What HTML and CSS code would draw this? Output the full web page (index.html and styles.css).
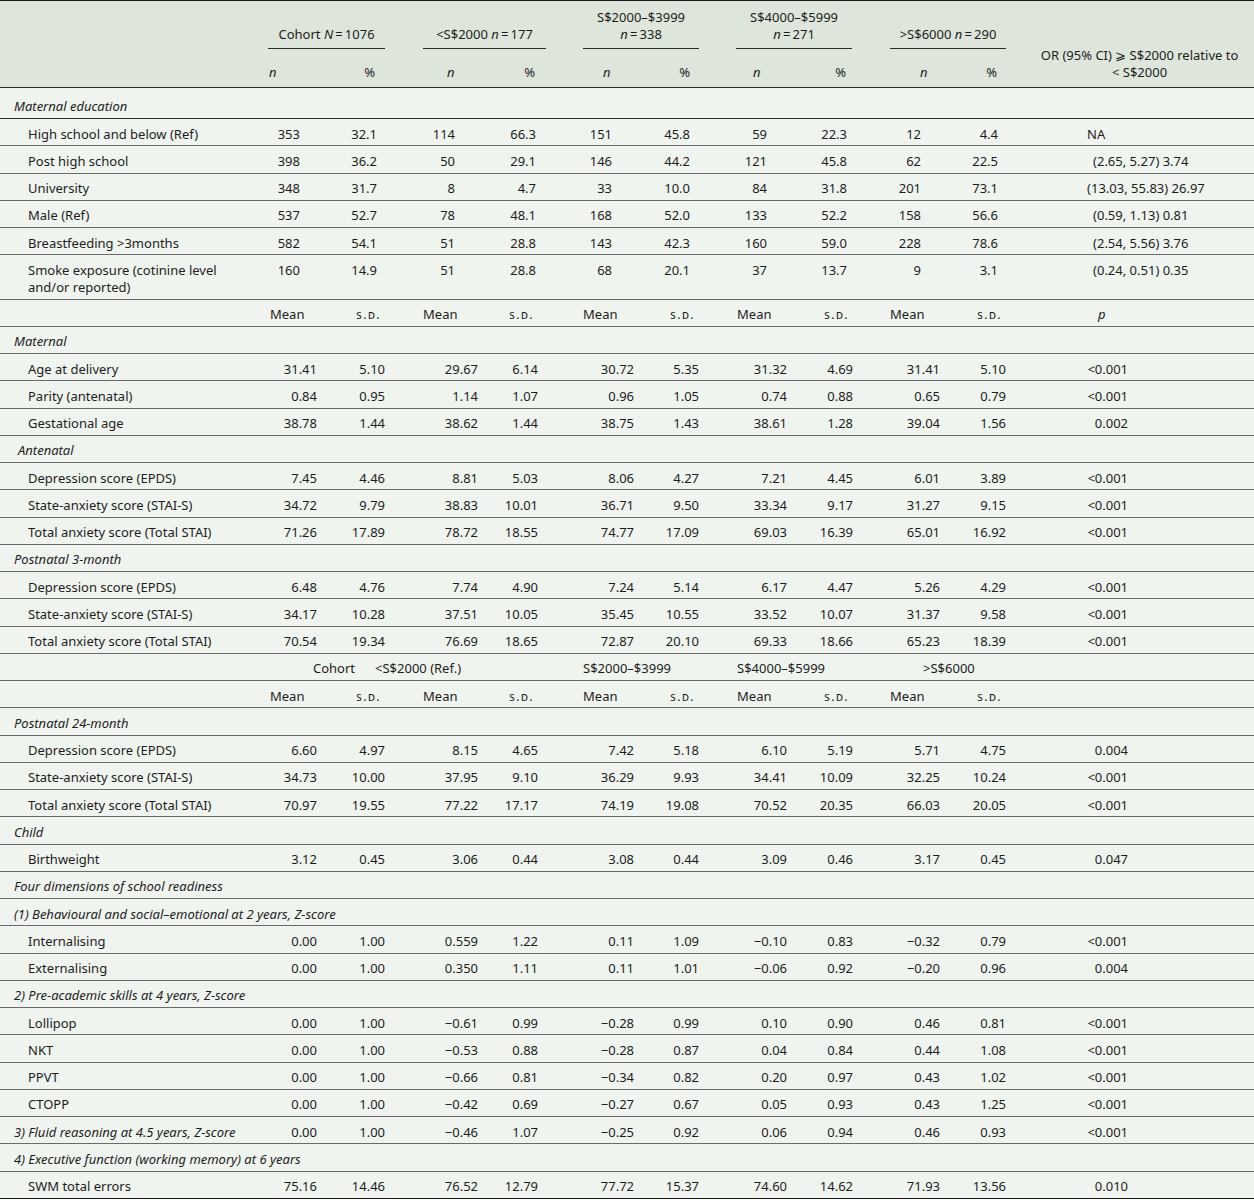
FILE: index.html
```html
<!DOCTYPE html>
<html lang="en">
<head>
<meta charset="utf-8">
<title>Table</title>
<link rel="stylesheet" href="styles.css">
</head>
<body>
<table class="tbl">
<colgroup>
<col class="w0"><col class="wa1"><col class="wb1"><col class="wa2"><col class="wb2"><col class="wa3"><col class="wb3"><col class="wa4"><col class="wb4"><col class="wa5"><col class="wb5"><col class="wor">
</colgroup>
<thead>
<tr class="h1">
<th rowspan="2" class="lh"></th>
<th colspan="2" class="grp g1"><div class="gl">Cohort <i>N</i>&#8201;=&#8201;1076</div></th>
<th colspan="2" class="grp g2"><div class="gl">&lt;S$2000 <i>n</i>&#8201;=&#8201;177</div></th>
<th colspan="2" class="grp g3"><div class="gl">S$2000–$3999<br><i>n</i>&#8201;=&#8201;338</div></th>
<th colspan="2" class="grp g4"><div class="gl">S$4000–$5999<br><i>n</i>&#8201;=&#8201;271</div></th>
<th colspan="2" class="grp g5"><div class="gl">&gt;S$6000 <i>n</i>&#8201;=&#8201;290</div></th>
<th rowspan="2" class="orh">OR (95% CI) ⩾ S$2000 relative to<br>&lt; S$2000</th>
</tr>
<tr class="h2">
<th><i>n</i></th><th>%</th>
<th><i>n</i></th><th>%</th>
<th><i>n</i></th><th>%</th>
<th><i>n</i></th><th>%</th>
<th><i>n</i></th><th>%</th>
</tr>
</thead>
<tbody>
<tr class="sec first"><td colspan="12">Maternal education</td></tr>
<tr class="c"><td>High school and below (Ref)</td><td>353</td><td>32.1</td><td>114</td><td>66.3</td><td>151</td><td>45.8</td><td>59</td><td>22.3</td><td>12</td><td>4.4</td><td class="or">NA</td></tr>
<tr class="c"><td>Post high school</td><td>398</td><td>36.2</td><td>50</td><td>29.1</td><td>146</td><td>44.2</td><td>121</td><td>45.8</td><td>62</td><td>22.5</td><td class="or in">(2.65, 5.27) 3.74</td></tr>
<tr class="c"><td>University</td><td>348</td><td>31.7</td><td>8</td><td>4.7</td><td>33</td><td>10.0</td><td>84</td><td>31.8</td><td>201</td><td>73.1</td><td class="or">(13.03, 55.83) 26.97</td></tr>
<tr class="c"><td>Male (Ref)</td><td>537</td><td>52.7</td><td>78</td><td>48.1</td><td>168</td><td>52.0</td><td>133</td><td>52.2</td><td>158</td><td>56.6</td><td class="or in">(0.59, 1.13) 0.81</td></tr>
<tr class="c"><td>Breastfeeding &gt;3months</td><td>582</td><td>54.1</td><td>51</td><td>28.8</td><td>143</td><td>42.3</td><td>160</td><td>59.0</td><td>228</td><td>78.6</td><td class="or in">(2.54, 5.56) 3.76</td></tr>
<tr class="c"><td>Smoke exposure (cotinine level<br>and/or reported)</td><td>160</td><td>14.9</td><td>51</td><td>28.8</td><td>68</td><td>20.1</td><td>37</td><td>13.7</td><td>9</td><td>3.1</td><td class="or in">(0.24, 0.51) 0.35</td></tr>
<tr class="mh"><td></td><td>Mean</td><td class="sd">s.d.</td><td>Mean</td><td class="sd">s.d.</td><td>Mean</td><td class="sd">s.d.</td><td>Mean</td><td class="sd">s.d.</td><td>Mean</td><td class="sd">s.d.</td><td class="p"><i>p</i></td></tr>
<tr class="sec"><td colspan="12">Maternal</td></tr>
<tr class="d"><td>Age at delivery</td><td>31.41</td><td>5.10</td><td>29.67</td><td>6.14</td><td>30.72</td><td>5.35</td><td>31.32</td><td>4.69</td><td>31.41</td><td>5.10</td><td>&lt;0.001</td></tr>
<tr class="d"><td>Parity (antenatal)</td><td>0.84</td><td>0.95</td><td>1.14</td><td>1.07</td><td>0.96</td><td>1.05</td><td>0.74</td><td>0.88</td><td>0.65</td><td>0.79</td><td>&lt;0.001</td></tr>
<tr class="d"><td>Gestational age</td><td>38.78</td><td>1.44</td><td>38.62</td><td>1.44</td><td>38.75</td><td>1.43</td><td>38.61</td><td>1.28</td><td>39.04</td><td>1.56</td><td>0.002</td></tr>
<tr class="sec sec2"><td colspan="12">Antenatal</td></tr>
<tr class="d"><td>Depression score (EPDS)</td><td>7.45</td><td>4.46</td><td>8.81</td><td>5.03</td><td>8.06</td><td>4.27</td><td>7.21</td><td>4.45</td><td>6.01</td><td>3.89</td><td>&lt;0.001</td></tr>
<tr class="d"><td>State-anxiety score (STAI-S)</td><td>34.72</td><td>9.79</td><td>38.83</td><td>10.01</td><td>36.71</td><td>9.50</td><td>33.34</td><td>9.17</td><td>31.27</td><td>9.15</td><td>&lt;0.001</td></tr>
<tr class="d"><td>Total anxiety score (Total STAI)</td><td>71.26</td><td>17.89</td><td>78.72</td><td>18.55</td><td>74.77</td><td>17.09</td><td>69.03</td><td>16.39</td><td>65.01</td><td>16.92</td><td>&lt;0.001</td></tr>
<tr class="sec"><td colspan="12">Postnatal 3-month</td></tr>
<tr class="d"><td>Depression score (EPDS)</td><td>6.48</td><td>4.76</td><td>7.74</td><td>4.90</td><td>7.24</td><td>5.14</td><td>6.17</td><td>4.47</td><td>5.26</td><td>4.29</td><td>&lt;0.001</td></tr>
<tr class="d"><td>State-anxiety score (STAI-S)</td><td>34.17</td><td>10.28</td><td>37.51</td><td>10.05</td><td>35.45</td><td>10.55</td><td>33.52</td><td>10.07</td><td>31.37</td><td>9.58</td><td>&lt;0.001</td></tr>
<tr class="d"><td>Total anxiety score (Total STAI)</td><td>70.54</td><td>19.34</td><td>76.69</td><td>18.65</td><td>72.87</td><td>20.10</td><td>69.33</td><td>18.66</td><td>65.23</td><td>18.39</td><td>&lt;0.001</td></tr>
<tr class="gr"><td></td><td colspan="10"><div class="grl"><span>Cohort</span><span>&lt;S$2000 (Ref.)</span><span>S$2000–$3999</span><span>S$4000–$5999</span><span>&gt;S$6000</span></div></td><td></td></tr>
<tr class="mh"><td></td><td>Mean</td><td class="sd">s.d.</td><td>Mean</td><td class="sd">s.d.</td><td>Mean</td><td class="sd">s.d.</td><td>Mean</td><td class="sd">s.d.</td><td>Mean</td><td class="sd">s.d.</td><td></td></tr>
<tr class="sec"><td colspan="12">Postnatal 24-month</td></tr>
<tr class="d"><td>Depression score (EPDS)</td><td>6.60</td><td>4.97</td><td>8.15</td><td>4.65</td><td>7.42</td><td>5.18</td><td>6.10</td><td>5.19</td><td>5.71</td><td>4.75</td><td>0.004</td></tr>
<tr class="d"><td>State-anxiety score (STAI-S)</td><td>34.73</td><td>10.00</td><td>37.95</td><td>9.10</td><td>36.29</td><td>9.93</td><td>34.41</td><td>10.09</td><td>32.25</td><td>10.24</td><td>&lt;0.001</td></tr>
<tr class="d"><td>Total anxiety score (Total STAI)</td><td>70.97</td><td>19.55</td><td>77.22</td><td>17.17</td><td>74.19</td><td>19.08</td><td>70.52</td><td>20.35</td><td>66.03</td><td>20.05</td><td>&lt;0.001</td></tr>
<tr class="sec"><td colspan="12">Child</td></tr>
<tr class="d"><td>Birthweight</td><td>3.12</td><td>0.45</td><td>3.06</td><td>0.44</td><td>3.08</td><td>0.44</td><td>3.09</td><td>0.46</td><td>3.17</td><td>0.45</td><td>0.047</td></tr>
<tr class="sec"><td colspan="12">Four dimensions of school readiness</td></tr>
<tr class="sec"><td colspan="12">(1) Behavioural and social–emotional at 2 years, Z-score</td></tr>
<tr class="d"><td>Internalising</td><td>0.00</td><td>1.00</td><td>0.559</td><td>1.22</td><td>0.11</td><td>1.09</td><td>−0.10</td><td>0.83</td><td>−0.32</td><td>0.79</td><td>&lt;0.001</td></tr>
<tr class="d"><td>Externalising</td><td>0.00</td><td>1.00</td><td>0.350</td><td>1.11</td><td>0.11</td><td>1.01</td><td>−0.06</td><td>0.92</td><td>−0.20</td><td>0.96</td><td>0.004</td></tr>
<tr class="sec"><td colspan="12">2) Pre-academic skills at 4 years, Z-score</td></tr>
<tr class="d"><td>Lollipop</td><td>0.00</td><td>1.00</td><td>−0.61</td><td>0.99</td><td>−0.28</td><td>0.99</td><td>0.10</td><td>0.90</td><td>0.46</td><td>0.81</td><td>&lt;0.001</td></tr>
<tr class="d"><td>NKT</td><td>0.00</td><td>1.00</td><td>−0.53</td><td>0.88</td><td>−0.28</td><td>0.87</td><td>0.04</td><td>0.84</td><td>0.44</td><td>1.08</td><td>&lt;0.001</td></tr>
<tr class="d"><td>PPVT</td><td>0.00</td><td>1.00</td><td>−0.66</td><td>0.81</td><td>−0.34</td><td>0.82</td><td>0.20</td><td>0.97</td><td>0.43</td><td>1.02</td><td>&lt;0.001</td></tr>
<tr class="d"><td>CTOPP</td><td>0.00</td><td>1.00</td><td>−0.42</td><td>0.69</td><td>−0.27</td><td>0.67</td><td>0.05</td><td>0.93</td><td>0.43</td><td>1.25</td><td>&lt;0.001</td></tr>
<tr class="d fl"><td>3) Fluid reasoning at 4.5 years, Z-score</td><td>0.00</td><td>1.00</td><td>−0.46</td><td>1.07</td><td>−0.25</td><td>0.92</td><td>0.06</td><td>0.94</td><td>0.46</td><td>0.93</td><td>&lt;0.001</td></tr>
<tr class="sec"><td colspan="12">4) Executive function (working memory) at 6 years</td></tr>
<tr class="d"><td>SWM total errors</td><td>75.16</td><td>14.46</td><td>76.52</td><td>12.79</td><td>77.72</td><td>15.37</td><td>74.60</td><td>14.62</td><td>71.93</td><td>13.56</td><td>0.010</td></tr>
</tbody>
</table>
</body>
</html>
```

FILE: styles.css
```css
html, body {
  margin: 0;
  padding: 0;
  background: #ffffff;
}

body {
  font-family: "Noto Sans", "Open Sans", "DejaVu Sans", sans-serif;
  font-size: 13px;
  color: #1d1d1d;
}

.tbl {
  width: 1254px;
  table-layout: fixed;
  border-collapse: collapse;
  background: #eff4ee;
  border-top: 1px solid #1a1a1a;
}

.w0 { width: 249px; }
.wa1 { width: 87px; }
.wb1 { width: 68px; }
.wa2 { width: 93px; }
.wb2 { width: 60px; }
.wa3 { width: 96px; }
.wb3 { width: 65px; }
.wa4 { width: 88px; }
.wb4 { width: 66px; }
.wa5 { width: 87px; }
.wb5 { width: 66px; }
.wor { width: 229px; }

/* ---------- header ---------- */
thead tr,
thead th {
  background: #dee6db;
}

th {
  font-weight: normal;
  padding: 0;
  line-height: 17px;
  white-space: nowrap;
}

.h1 th {
  vertical-align: bottom;
  padding-top: 8px;
  padding-bottom: 1px;
}

.h1 th.lh {
  border-bottom: 1px solid #2a2a2a;
}

.gl {
  text-align: center;
  padding-bottom: 5px;
  border-bottom: 1px solid #2a2a2a;
}

.g1 .gl { margin: 0 19px 0 19px; }
.g2 .gl { margin: 0 11px 0 19px; }
.g3 .gl { margin: 0 19px 0 26px; }
.g4 .gl { margin: 0 20px 0 18px; }
.g5 .gl { margin: 0 19px 0 18px; }

.h2 th {
  padding-top: 14px;
  padding-bottom: 6px;
  border-bottom: 1px solid #2a2a2a;
}

.h2 th:nth-child(odd) { text-align: left; }
.h2 th:nth-child(even) { text-align: right; }
.h2 th:nth-child(1) { padding-left: 20px; }
.h2 th:nth-child(3) { padding-left: 43px; }
.h2 th:nth-child(5) { padding-left: 46px; }
.h2 th:nth-child(7) { padding-left: 35px; }
.h2 th:nth-child(9) { padding-left: 48px; }
.h2 th:nth-child(2) { padding-right: 29px; }
.h2 th:nth-child(4) { padding-right: 22px; }
.h2 th:nth-child(6) { padding-right: 28px; }
.h2 th:nth-child(8) { padding-right: 26px; }
.h2 th:nth-child(10) { padding-right: 28px; }

.h1 th.orh {
  vertical-align: top;
  text-align: center;
  padding-top: 46px;
  padding-bottom: 0;
  border-bottom: 1px solid #2a2a2a;
}

/* ---------- body ---------- */
td {
  padding: 6.5px 0 2.75px 0;
  line-height: 17px;
  border-bottom: 1px solid #6a6a6a;
  white-space: nowrap;
  vertical-align: top;
}

tbody tr:last-child td {
  border-bottom-color: #1a1a1a;
}

td:first-child {
  padding-left: 28px;
}

.sec td {
  padding-left: 14px;
  font-style: italic;
}

.sec2 td { padding-left: 18px; }

.first td {
  padding-top: 10px;
  padding-bottom: 3px;
  border-bottom-color: #2a2a2a;
}

.fl td:first-child {
  padding-left: 14px;
  font-style: italic;
}

/* numeric columns: mean / s.d. rows */
.d td,
.c td {
  text-align: right;
  padding-right: 19px;
}

.d td:first-child,
.c td:first-child {
  text-align: left;
  padding-right: 0;
}

.d td:last-child {
  padding-right: 126px;
}

/* count / percentage rows */
.c td:nth-child(2) { padding-right: 36px; }
.c td:nth-child(3) { padding-right: 27px; }
.c td:nth-child(4) { padding-right: 42px; }
.c td:nth-child(5) { padding-right: 21px; }
.c td:nth-child(6) { padding-right: 41px; }
.c td:nth-child(7) { padding-right: 28px; }
.c td:nth-child(8) { padding-right: 39px; }
.c td:nth-child(9) { padding-right: 25px; }
.c td:nth-child(10) { padding-right: 38px; }
.c td:nth-child(11) { padding-right: 27px; }

.c td.or {
  text-align: left;
  padding-left: 62px;
  padding-right: 0;
}

.c td.or.in {
  padding-left: 68px;
}

/* Mean / s.d. sub-header rows */
.mh td:nth-child(even) { text-align: left; }
.mh td:nth-child(2) { padding-left: 21px; }
.mh td:nth-child(4) { padding-left: 19px; }
.mh td:nth-child(6) { padding-left: 26px; }
.mh td:nth-child(8) { padding-left: 19px; }
.mh td:nth-child(10) { padding-left: 18px; }

.sd {
  text-align: right;
  padding-right: 23px;
  font-size: 12px;
  font-variant: small-caps;
  letter-spacing: 1.5px;
}

.p {
  padding-left: 73px;
}

/* group label row */
.grl {
  display: grid;
  grid-template-columns: 62px 208px 154px 186px auto;
  padding-left: 64px;
}
```
